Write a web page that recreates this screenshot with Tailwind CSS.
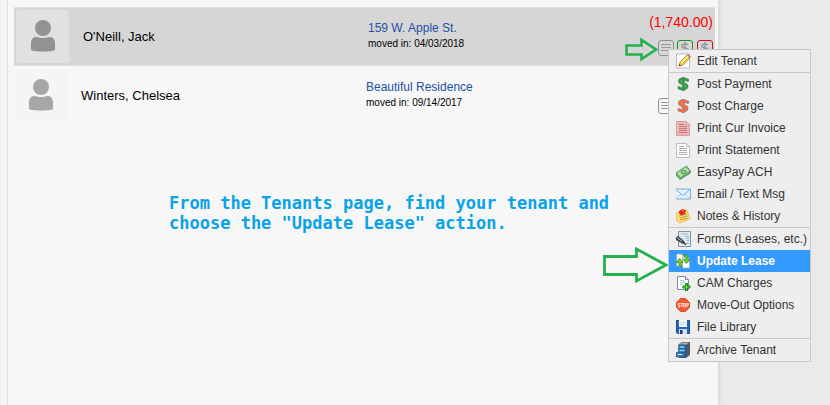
<!DOCTYPE html>
<html lang="en">
<head>
    <meta charset="UTF-8">
    <meta name="viewport" content="width=device-width, initial-scale=1.0">
    <title>Tenants</title>
    <script src="https://cdn.jsdelivr.net/npm/@tailwindcss/browser@4"></script>
</head>
<body class="relative flex min-h-screen bg-[#ebe9ea] pr-28 font-['Liberation_Sans',Arial,sans-serif] text-black">
    <main class="flex-1 border-l-[7px] border-[#f5f5f5] bg-[#f7f7f7] shadow-[1px_0_3px_#d0d0d0]">
        <div class="min-h-screen border-l border-[#dedede] pt-[7px] pl-1.5 pr-[3px]">

            <!-- Tenant rows -->
            <div class="flex items-center border-y border-[#e0e0e0] bg-[#d6d6d6] h-[59px] pl-0.5">
                <div class="flex size-[53px] shrink-0 items-center justify-center rounded bg-[#e1e1e1] pb-0.5">
                    <svg class="h-8 w-6" viewBox="0 0 24 32" fill="#929292">
                        <circle cx="12" cy="8" r="8" />
                        <path d="M5 17c2 0 3 1 7 1s5-1 7-1c3 0 5 3 5 6v7c-3 2-21 2-24 0v-7c0-3 2-6 5-6z" />
                    </svg>
                </div>
                <div class="w-[299px] pl-3.5 text-[13px]">O'Neill, Jack</div>
                <div class="flex-1 pb-0.5">
                    <a href="#" class="block text-xs leading-4 text-[#2450a8]">159 W. Apple St.</a>
                    <p class="text-[10px] leading-4">moved in: 04/03/2018</p>
                </div>
                <div class="self-start pt-1 pr-0.5">
                    <p class="text-right text-sm leading-5 text-[#ff0000]">(1,740.00)</p>
                    <div class="mt-2 flex justify-end gap-[3px]">
                        <button aria-label="Tenant actions" class="size-4 rounded-[3px] border border-[#909090]">
                            <svg class="size-full" viewBox="0 0 14 14" stroke="#999"><path d="M2 3.5h10M2 6.5h10M2 9.5h10" /></svg>
                        </button>
                        <button aria-label="Post payment" class="size-4 rounded-[3px] border border-[#109618]">
                            <svg class="size-full" viewBox="0 0 14 14" fill="none" stroke="#999" stroke-width="1.5"><path d="M10 4Q9 3 7 3 4 3 4 5t3 2 3 2-3 2q-2 0-3-1M7 1v12" /></svg>
                        </button>
                        <button aria-label="Post charge" class="ml-px size-4 rounded-[3px] border border-[#d4101c]">
                            <svg class="size-full" viewBox="0 0 14 14" fill="none" stroke="#999" stroke-width="1.5"><path d="M10 4Q9 3 7 3 4 3 4 5t3 2 3 2-3 2q-2 0-3-1M7 1v12" /></svg>
                        </button>
                    </div>
                </div>
            </div>
            <div class="flex h-[59px] items-center">
                <div class="flex size-[53px] shrink-0 items-center justify-center rounded bg-[#f5f5f5] pb-0.5">
                    <svg class="h-8 w-6" viewBox="0 0 24 32" fill="#a7a7a7">
                        <circle cx="12" cy="8" r="8" />
                        <path d="M5 17c2 0 3 1 7 1s5-1 7-1c3 0 5 3 5 6v7c-3 2-21 2-24 0v-7c0-3 2-6 5-6z" />
                    </svg>
                </div>
                <div class="w-[299px] pl-3.5 text-[13px]">Winters, Chelsea</div>
                <div class="flex-1 pb-0.5">
                    <a href="#" class="block text-xs leading-4 text-[#2450a8]">Beautiful Residence</a>
                    <p class="text-[10px] leading-4">moved in: 09/14/2017</p>
                </div>
                <button aria-label="Tenant actions" class="mt-5 mr-[41px] size-4 rounded-[3px] border border-[#909090]">
                    <svg class="size-full" viewBox="0 0 14 14" stroke="#999"><path d="M2 3.5h10M2 6.5h10M2 9.5h10" /></svg>
                </button>
            </div>

            <p class="mt-17 ml-[155px] font-['DejaVu_Sans_Mono',monospace] text-[17px] leading-5 font-bold text-[#0aa2e8]">
                From the Tenants page, find your tenant and<br>choose the "Update Lease" action.
            </p>
        </div>
    </main>

    <!-- Callout arrows -->
    <svg class="absolute top-[37px] right-[172px] h-[25px] w-[34px]" viewBox="0 0 34 25" fill="none" stroke="#22b14c" stroke-width="2.6">
        <path d="M2.500 8.500H17.500V3L32 12.500 17.500 22V17.500H2.500z" />
    </svg>
    <svg class="absolute top-[246px] right-[161px] h-[38px] w-[67px]" viewBox="0 0 67 38" fill="none" stroke="#22b14c" stroke-width="2.8">
        <path d="M2.500 10.500H34.500V3L64 19 34.500 35V28.500H2.500z" />
    </svg>

    <!-- Tenant actions menu -->
    <nav class="absolute top-[49px] right-[19px] w-[143px] border border-[#c8c8c8] bg-[#eeeeee] text-xs whitespace-nowrap text-[#333]">
        <a href="#" class="flex h-[22px] items-center gap-[5px] pl-[7px]">
            <svg class="size-4 shrink-0" viewBox="0 0 16 16">
                <path d="M.5 1h13v14H.5z" fill="#fff" stroke="#bbb" />
                <path d="M3 13l1-4 7-7 3 3-7 7z" fill="#f5c84b" stroke="#b48222" stroke-width=".8" />
                <path d="M5 10l7-7" stroke="#fff1a0" stroke-width="1.4" /><path d="M11 2l3 3 1-1-2.500-3z" fill="#d87a65" /><path d="M3 13l.5-2 1.500 1.500z" fill="#333" />
            </svg>
            Edit Tenant
        </a>
        <a href="#" class="flex h-[23px] items-center gap-[5px] border-t border-[#c8c8c8] pl-[7px]">
            <svg class="size-4 shrink-0" viewBox="0 0 16 16" fill="none">
                <path d="M11.500 5.500V4Q9.500 3 7 3 3.500 3 3.500 5.300C3.500 8.500 11 6.800 11 10.300 11 13 5 13.500 3 12V10.500M7.300 1v14" stroke="#858585" stroke-width="3" />
                <path d="M11.500 5.500V4Q9.500 3 7 3 3.500 3 3.500 5.300C3.500 8.500 11 6.800 11 10.300 11 13 5 13.500 3 12V10.500M7.300 1.500v13" stroke="#27a33a" stroke-width="1.9" />
            </svg>
            Post Payment
        </a>
        <a href="#" class="flex h-[22px] items-center gap-[5px] pl-[7px]">
            <svg class="size-4 shrink-0" viewBox="0 0 16 16" fill="none">
                <path d="M11.500 5.500V4Q9.500 3 7 3 3.500 3 3.500 5.300C3.500 8.500 11 6.800 11 10.300 11 13 5 13.500 3 12V10.500M7.300 1v14" stroke="#858585" stroke-width="3" />
                <path d="M11.500 5.500V4Q9.500 3 7 3 3.500 3 3.500 5.300C3.500 8.500 11 6.800 11 10.300 11 13 5 13.500 3 12V10.500M7.300 1.500v13" stroke="#f76a43" stroke-width="1.900" />
            </svg>
            Post Charge
        </a>
        <a href="#" class="flex h-[22px] items-center gap-[5px] pl-[7px]">
            <svg class="size-4 shrink-0" viewBox="0 0 16 16">
                <path d="M.5 1.500h10l3 3v11H.5z" fill="#efb5b5" stroke="#d6a0a0" /><path d="M10.500 1.500v3h3" fill="#f7d0d0" stroke="#d6a0a0" />
                <path d="M3 4.500h5M3 6.500h8M3 8.500h8M3 10.500h8M3 12.500h8" stroke="#b97f7f" />
            </svg>
            Print Cur Invoice
        </a>
        <a href="#" class="flex h-[22px] items-center gap-[5px] pl-[7px]">
            <svg class="size-4 shrink-0" viewBox="0 0 16 16">
                <path d="M.5 1.500h10l3 3v11H.5z" fill="#fff" stroke="#bbb" /><path d="M10.500 1.500v3h3" fill="#eee" stroke="#bbb" />
                <path d="M3 4.500h5M3 6.500h8M3 8.500h8M3 10.500h8M3 12.500h8" stroke="#b0b0b0" />
            </svg>
            Print Statement
        </a>
        <a href="#" class="flex h-[22px] items-center gap-[5px] pl-[7px]">
            <svg class="size-4 shrink-0" viewBox="0 0 16 16">
                <path d="M0 9L10.500 2l4 5v2L4 15.500 0 11z" fill="#71ad73" stroke="#478e50" stroke-width=".8" />
                <path d="M.5 9L10 2.500 14 7l-9.500 6.500z" fill="#b6dda9" stroke="#5ba365" stroke-width=".8" />
                <ellipse cx="7.500" cy="8" rx="3" ry="2.300" fill="#64ab68" /><path d="M6.500 7l2 2" stroke="#e5f4df" />
            </svg>
            EasyPay ACH
        </a>
        <a href="#" class="flex h-[22px] items-center gap-[5px] pl-[7px]">
            <svg class="size-4 shrink-0" viewBox="0 0 16 16" fill="none">
                <path d="M-.5 3h15v10h-15z" fill="#e4f2fd" stroke="#78a9d8" />
                <path d="M0 12.500L5 8M14 12.500L9 8" stroke="#a8cbea" /><path d="M0 3.500l7 6 7-6" stroke="#78a9d8" />
            </svg>
            Email / Text Msg
        </a>
        <a href="#" class="flex h-[22px] items-center gap-[5px] pl-[7px]">
            <svg class="size-4 shrink-0" viewBox="0 0 16 16">
                <path d="M0 5l11-3 3 9-10 4-3-2z" fill="#ffdf72" stroke="#e3b64b" stroke-width=".8" />
                <path d="M3 8l8-2M3.500 10l8-2M4 12l8-2" stroke="#ad8437" stroke-width=".8" />
                <path d="M3 3l3-2 4 1-1 4-3 1-3-2z" fill="#e12b1c" /><path d="M3 5l4 2-3-.5z" fill="#851511" /><path d="M5 2l3 1" stroke="#ff8068" />
            </svg>
            Notes &amp; History
        </a>
        <a href="#" class="flex h-[23px] items-center gap-[5px] border-t border-[#c8c8c8] pl-[7px]">
            <svg class="size-4 shrink-0" viewBox="0 0 16 16">
                <path d="M2.500.5h12v15h-12z" fill="#dce9f2" stroke="#8295a4" />
                <path d="M5 3h7M9 5.500h4M10 7.500h3M11 9.500h2M10 12.500h3" stroke="#9ab0c1" />
                <path d="M-1 7l3-2 5 4 3 5-5-2-5-3z" fill="#454545" /><path d="M1 6.500l5 4" stroke="#bbb" /><path d="M7 10l3 4" stroke="#222" />
            </svg>
            Forms (Leases, etc.)
        </a>
        <a href="#" class="flex h-[22px] items-center gap-[5px] bg-[#3399ff] pl-[7px] font-bold text-white">
            <svg class="size-4 shrink-0" viewBox="0 0 16 16">
                <path d="M.5 1h5l2 2v10h-7z" fill="#f4f5ec" stroke="#9ba5aa" stroke-width=".7" /><path d="M6.500 4h5l2 2v9h-7z" fill="#fff" stroke="#9ba5aa" stroke-width=".7" />
                <path d="M0 9.500l3.500-4 3.500 4H5q0 3 1.500 4.500-4-.5-4-4.500z" fill="#70cf35" stroke="#2e8b19" stroke-width=".7" />
                <path d="M7.500 1.500q4.500 0 4.500 5h2l-3.500 4-3.500-4h2.200Q9.500 3 7.500 1.500z" fill="#70cf35" stroke="#2e8b19" stroke-width=".7" />
            </svg>
            Update Lease
        </a>
        <a href="#" class="flex h-[22px] items-center gap-[5px] pl-[7px]">
            <svg class="size-4 shrink-0" viewBox="0 0 16 16">
                <path d="M1.500 1.500h8l3 3v10h-11z" fill="#fafcff" stroke="#7d8cad" /><path d="M9.500 1.500v3h3" fill="#dbe3f1" stroke="#7d8cad" />
                <path d="M4 5.500h4M4 7.500h5M4 9.500h3" stroke="#b6c1d5" />
                <path d="M9.500 8.500h2V11H14v2h-2.500v2.500h-2V13H7v-2h2.500z" fill="#59dc35" stroke="#16801a" />
            </svg>
            CAM Charges
        </a>
        <a href="#" class="flex h-[22px] items-center gap-[5px] pl-[7px]">
            <svg class="size-4 shrink-0" viewBox="0 0 16 16">
                <path d="M4.500 1.500h5l4 4v5l-4 4h-5l-4-4v-5z" fill="#f35b35" stroke="#d84c2e" />
                <path d="M4 6.500H2.300V8h1.500v2H2M4.500 6.500h2.700M5.900 6.500V10M7.800 6.500h1.500V10H7.800zM10.800 10V6.500h1.500v1.800h-1.500" fill="none" stroke="#fff" stroke-width=".8" />
            </svg>
            Move-Out Options
        </a>
        <a href="#" class="flex h-[22px] items-center gap-[5px] pl-[7px]">
            <svg class="size-4 shrink-0" viewBox="0 0 16 16">
                <path d="M.5 1.500h13v13h-12l-1-1z" fill="#2866b7" stroke="#174d96" />
                <path d="M3 1h8v7H3z" fill="#f3f7fc" /><path d="M4 3.500h6M4 5.500h6" stroke="#c9d5e3" />
                <path d="M3 10h8v5H3z" fill="#d5dfeb" /><path d="M4 11h2.500v4H4z" fill="#173c6f" />
            </svg>
            File Library
        </a>
        <a href="#" class="flex h-[23px] items-center gap-[5px] border-t border-[#c8c8c8] pl-[7px]">
            <svg class="size-4 shrink-0" viewBox="0 0 16 16">
                <path d="M3 2l3-2h8v13l-4 3H3z" fill="#4d5964" /><path d="M3 2.500L6 .5h7L10 3z" fill="#a4adb3" />
                <path d="M2.500 3h7.500v12H2.500z" fill="#226cab" stroke="#244c70" stroke-width=".6" />
                <path d="M3.500 5h5M3.500 8.500h5" stroke="#8ed0fa" stroke-width="1.500" />
                <path d="M0 10.500h8v4.500H0z" fill="#2c7dbf" stroke="#21547f" stroke-width=".6" /><path d="M2 12.500h4" stroke="#fff" />
            </svg>
            Archive Tenant
        </a>
    </nav>
</body>
</html>
